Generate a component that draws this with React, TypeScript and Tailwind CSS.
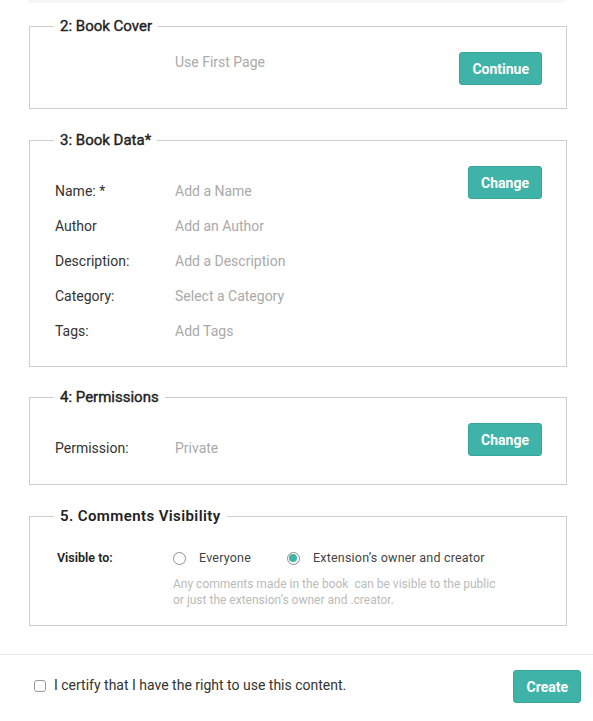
import React, { useState } from "react";

const font = { fontFamily: "Roboto, 'Liberation Sans', sans-serif" };

const Button = ({ label }: { label: string }) => (
  <button className="h-[33px] px-[12px] rounded-[3px] bg-[#3fb3a8] border border-[#38a69b] text-white text-[14px] font-bold leading-none">
    {label}
  </button>
);

const Section = ({
  title,
  className,
  children,
}: {
  title: string;
  className: string;
  children: React.ReactNode;
}) => (
  <fieldset className={"mx-[29px] w-[538px] border border-[#cdcdcd] pl-[24px] pr-[24px] " + className}>
    <legend className="px-[6px] h-[20px] text-[15px] leading-[20px] font-normal text-[#222] [-webkit-text-stroke:0.4px_#222]">
      {title}
    </legend>
    {children}
  </fieldset>
);

const Row = ({ label, value }: { label: string; value: string }) => (
  <div className="flex h-[20px] leading-[20px] text-[14px]">
    <span className="w-[120px] text-[#333]">{label}</span>
    <span className="text-[#aaa]">{value}</span>
  </div>
);

const Radio = ({ checked, label, onClick }: { checked: boolean; label: string; onClick: () => void }) => (
  <div className="flex items-center cursor-pointer" onClick={onClick}>
    <span className="w-[13px] h-[13px] rounded-full border border-[#8f8f8f] flex items-center justify-center bg-white">
      {checked && <span className="w-[8px] h-[8px] rounded-full bg-[#3fb3a8]" />}
    </span>
    <span className="ml-[13px] text-[12.5px] text-[#444] tracking-[0.2px]">{label}</span>
  </div>
);

const App = () => {
  const [visibility, setVisibility] = useState("owner");
  const [certified, setCertified] = useState(false);

  return (
    <div className="w-[593px] h-[721px] bg-white overflow-hidden" style={font}>
      <div className="h-[3px] mx-[28px] bg-[#f6f6f6]" />

      <Section title="2: Book Cover" className="mt-[13px]">
        <div className="flex items-start justify-between pt-[16px] pb-[23px]">
          <span className="ml-[121px] text-[14px] leading-[20px] text-[#aaa]">Use First Page</span>
          <Button label="Continue" />
        </div>
      </Section>

      <Section title="3: Book Data*" className="mt-[21px]">
        <div className="flex items-start justify-between pt-[16px] pb-[25px]">
          <div className="flex flex-col gap-[15px] mt-[15px] ml-[1px]">
            <Row label="Name: *" value="Add a Name" />
            <Row label="Author" value="Add an Author" />
            <Row label="Description:" value="Add a Description" />
            <Row label="Category:" value="Select a Category" />
            <Row label="Tags:" value="Add Tags" />
          </div>
          <Button label="Change" />
        </div>
      </Section>

      <Section title="4: Permissions" className="mt-[20px]">
        <div className="flex items-start justify-between pt-[16px] pb-[26px]">
          <div className="mt-[15px] ml-[1px]">
            <Row label="Permission:" value="Private" />
          </div>
          <Button label="Change" />
        </div>
      </Section>

      <fieldset className="mx-[29px] mt-[21px] w-[538px] border border-[#cdcdcd] pl-[24px] pr-[24px]">
        <legend className="px-[6px] h-[20px] text-[15px] leading-[20px] font-semibold tracking-[0.4px] text-[#222]">
          5. Comments Visibility
        </legend>
        <div className="pt-[22px] pb-[17px]">
          <div className="flex items-center h-[20px]">
            <span className="ml-[3px] w-[116px] text-[12.5px] font-semibold text-[#222]">Visible to:</span>
            <Radio checked={visibility === "all"} label="Everyone" onClick={() => setVisibility("all")} />
            <div className="ml-[36px]">
              <Radio
                checked={visibility === "owner"}
                label="Extension’s owner and creator"
                onClick={() => setVisibility("owner")}
              />
            </div>
          </div>
          <p className="mt-[8px] ml-[119px] text-[12px] leading-[16px] text-[#bbb]">
            Any comments made in the book &nbsp;can be visible to the public
            <br />
            or just the extension’s owner and .creator.
          </p>
        </div>
      </fieldset>

      <div className="mt-[28px] border-t border-[#e6e6e6] flex items-start justify-between pt-[15px] pl-[34px] pr-[12px]">
        <label className="flex items-center h-[33px] -mt-[1px] cursor-pointer">
          <span
            onClick={() => setCertified(!certified)}
            className="w-[12px] h-[12px] rounded-[3px] border border-[#999] bg-white flex items-center justify-center text-[9px] leading-none text-[#3fb3a8]"
          >
            {certified ? "✓" : ""}
          </span>
          <span className="ml-[8px] text-[14px] text-[#333]">I certify that I have the right to use this content.</span>
        </label>
        <Button label="Create" />
      </div>
    </div>
  );
};

export default App;
